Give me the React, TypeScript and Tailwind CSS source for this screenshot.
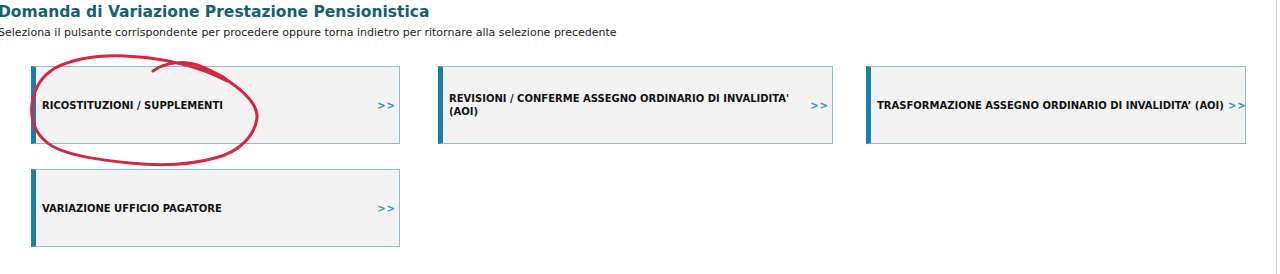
import React from "react";

function Card({
  w,
  children,
}: {
  w: string;
  children: React.ReactNode;
}) {
  return (
    <div
      className={`${w} h-[78px] flex items-center bg-[#f2f2f2] border border-[#8fbccb] border-l-[5px] border-l-[#1a7ea6] pl-[6px] pr-[3px]`}
    >
      <div className="flex-1 text-[10px] font-bold leading-[13px] text-[#111] pr-[4px]">
        {children}
      </div>
      <div className="text-[10px] font-bold text-[#3c91b3] tracking-[1px]">&gt;&gt;</div>
    </div>
  );
}

export default function App() {
  return (
    <div
      className="relative w-[1277px] h-[274px] bg-white border-r border-[#cfcfcf] overflow-hidden"
      style={{ fontFamily: '"DejaVu Sans", Verdana, sans-serif' }}
    >
      <div className="ml-[-2px] pt-[2px]">
        <h1 className="text-[15.5px] font-bold leading-[20px] text-[#17606f]">
          Domanda di Variazione Prestazione Pensionistica
        </h1>
        <p className="text-[11px] leading-[14px] mt-[4px] text-[#222]">
          Seleziona il pulsante corrispondente per procedere oppure torna indietro per ritornare alla selezione precedente
        </p>
      </div>
      <div className="pl-[31px] pt-[26px] flex flex-col gap-[25px]">
        <div className="flex">
          <div className="w-[407px]">
            <Card w="w-[369px]">RICOSTITUZIONI / SUPPLEMENTI</Card>
          </div>
          <div className="w-[428px]">
            <Card w="w-[395px]">
              REVISIONI / CONFERME ASSEGNO ORDINARIO DI INVALIDITA'
              <br />
              (AOI)
            </Card>
          </div>
          <div>
            <Card w="w-[380px]">
              <span className="whitespace-nowrap">TRASFORMAZIONE ASSEGNO ORDINARIO DI INVALIDITA’ (AOI)</span>
            </Card>
          </div>
        </div>
        <div className="flex">
          <Card w="w-[369px]">VARIAZIONE UFFICIO PAGATORE</Card>
        </div>
      </div>
      <svg
        className="absolute left-0 top-0 pointer-events-none"
        width="300"
        height="180"
        viewBox="0 0 300 180"
      >
        <path
          d="M153 71 C165 62 185 60 200 66 C212 71 222 75 227 80 C245 92 258 105 257 118 C255 135 240 152 215 158 C190 165 160 166 130 163 C100 160 70 156 52 146 C36 136 30 122 32 104 C34 88 42 76 55 68 C75 58 100 55 125 56 C150 57 180 62 205 71 C215 75 222 78 227 81"
          fill="none"
          stroke="#d3283f"
          strokeWidth="3"
          strokeLinecap="round"
          strokeLinejoin="round"
        />
      </svg>
    </div>
  );
}
